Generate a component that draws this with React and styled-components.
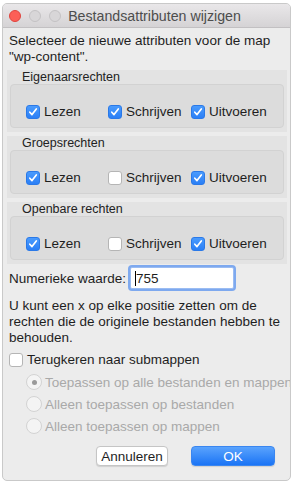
import styled, { createGlobalStyle } from "styled-components";

const GlobalStyle = createGlobalStyle`
  html, body {
    margin: 0;
    padding: 0;
    background: #ffffff;
  }
  body {
    font-family: "Liberation Sans", Arial, sans-serif;
    -webkit-font-smoothing: antialiased;
  }
`;

const Page = styled.div`
  width: 293px;
  height: 484px;
  padding: 3px 2px 3px 2px;
  box-sizing: border-box;
  background: #ffffff;
`;

const Window = styled.div`
  width: 289px;
  height: 478px;
  background: #ececec;
  border: 1px solid #c9c9c9;
  border-radius: 5px;
  box-sizing: border-box;
  overflow: hidden;
  display: flex;
  flex-direction: column;
  color: #1e1e1e;
  font-size: 13px;
`;

const TitleBar = styled.div`
  height: 23px;
  flex: none;
  display: flex;
  align-items: center;
  position: relative;
  background: linear-gradient(#e9e7e9, #d5d3d5);
  border-bottom: 1px solid #c2c0c2;
`;

const Lights = styled.div`
  display: flex;
  gap: 8px;
  padding-left: 6px;
`;

const Light = styled.span`
  width: 12px;
  height: 12px;
  border-radius: 50%;
  box-sizing: border-box;
  background: ${(p) => (p.$active ? "#fc5f57" : "#d8d6d8")};
  border: 1px solid ${(p) => (p.$active ? "#e0443e" : "#c4c2c4")};
`;

const Title = styled.div`
  position: absolute;
  left: 16px;
  right: 0;
  text-align: center;
  color: #4d4d4d;
  font-size: 14.2px;
  pointer-events: none;
`;

const Body = styled.div`
  flex: 1;
  display: flex;
  flex-direction: column;
  padding: 5px 3px 0 4px;
`;

const Text = styled.p`
  margin: 0 0 0 2px;
  line-height: 16px;
  font-size: 13.5px;
`;

const Sections = styled.div`
  display: flex;
  flex-direction: column;
  gap: 4px;
  margin-top: 5px;
`;

const Section = styled.div`
  height: 62px;
  box-sizing: border-box;
  background: #e3e3e3;
  padding: 0 3px 4px 3px;
  display: flex;
  flex-direction: column;
`;

const SectionLabel = styled.div`
  font-size: 12.5px;
  line-height: 14px;
  padding: 0 0 0 12px;
  color: #222;
`;

const Inner = styled.div`
  flex: 1;
  background: #dcdcdc;
  border: 1px solid #d2d2d2;
  border-radius: 4px;
  display: grid;
  grid-template-columns: 82px 83px auto;
  align-items: center;
  padding: 11px 0 0 15px;
  box-sizing: border-box;
`;

const CheckRow = styled.label`
  display: flex;
  align-items: center;
  gap: 4px;
  font-size: 13.5px;
  white-space: nowrap;
`;

const Box = styled.span`
  width: 14px;
  height: 14px;
  flex: none;
  box-sizing: border-box;
  border-radius: 3px;
  display: flex;
  align-items: center;
  justify-content: center;
  background: ${(p) => (p.$checked ? "linear-gradient(#4a9bfd, #2b7ff6)" : "#ffffff")};
  border: 1px solid ${(p) => (p.$checked ? "#2a79e8" : "#b5b5b5")};
`;

const Check = ({ checked, children }) => (
  <CheckRow>
    <Box $checked={checked}>
      {checked && (
        <svg width="10" height="10" viewBox="0 0 10 10">
          <path d="M1.8 5.2 L4 7.6 L8.3 2" fill="none" stroke="#fff" strokeWidth="1.7" strokeLinecap="round" strokeLinejoin="round" />
        </svg>
      )}
    </Box>
    {children}
  </CheckRow>
);

const NumRow = styled.div`
  display: flex;
  align-items: center;
  margin-top: 3px;
  padding-left: 2px;
  gap: 3px;
  font-size: 13.5px;
`;

const NumInput = styled.div`
  width: 104px;
  height: 22px;
  box-sizing: border-box;
  background: #fff;
  border: 1px solid #9bbcf2;
  box-shadow: 0 0 0 2px #7ea9ef;
  border-radius: 2px;
  margin-left: 1px;
  display: flex;
  align-items: center;
  padding-left: 4px;
  font-size: 13.5px;
`;

const Caret = styled.span`
  width: 1px;
  height: 15px;
  background: #000;
`;

const Hint = styled.p`
  margin: 9px 0 0 2px;
  line-height: 16px;
  font-size: 13.5px;
`;

const Recurse = styled.div`
  margin-top: 6px;
  padding-left: 2px;
`;

const Radios = styled.div`
  display: flex;
  flex-direction: column;
  gap: 6px;
  padding-left: 19px;
  margin-top: 7px;
`;

const RadioRow = styled.div`
  display: flex;
  align-items: center;
  gap: 3px;
  color: #a9a9a9;
  font-size: 13.5px;
  white-space: nowrap;
  height: 16px;
`;

const RadioDot = styled.span`
  width: 16px;
  height: 16px;
  flex: none;
  box-sizing: border-box;
  border-radius: 50%;
  background: #f4f4f4;
  border: 1px solid #d3d3d3;
  display: flex;
  align-items: center;
  justify-content: center;
  &::after {
    content: "";
    width: 5px;
    height: 5px;
    border-radius: 50%;
    background: ${(p) => (p.$on ? "#9a9a9a" : "transparent")};
  }
`;

const Buttons = styled.div`
  display: flex;
  justify-content: flex-end;
  gap: 23px;
  margin-top: auto;
  margin-bottom: 14px;
  padding-right: 12px;
`;

const Button = styled.div`
  height: 20px;
  width: ${(p) => p.$w}px;
  box-sizing: border-box;
  border-radius: 4px;
  display: flex;
  align-items: center;
  justify-content: center;
  font-size: 13.5px;
  background: ${(p) => (p.$primary ? "linear-gradient(#5aa3fd, #1b74f5)" : "#ffffff")};
  color: ${(p) => (p.$primary ? "#ffffff" : "#1e1e1e")};
  border: 1px solid ${(p) => (p.$primary ? "#3a86f0" : "#c5c5c5")};
  box-shadow: 0 1px 1px rgba(0, 0, 0, 0.12);
`;

const sections = [
  { label: "Eigenaarsrechten", values: [true, true, true] },
  { label: "Groepsrechten", values: [true, false, true] },
  { label: "Openbare rechten", values: [true, false, true] },
];

const names = ["Lezen", "Schrijven", "Uitvoeren"];

const radios = [
  "Toepassen op alle bestanden en mappen",
  "Alleen toepassen op bestanden",
  "Alleen toepassen op mappen",
];

export default function App() {
  return (
    <Page>
      <GlobalStyle />
      <Window>
        <TitleBar>
          <Lights>
            <Light $active />
            <Light />
            <Light />
          </Lights>
          <Title>Bestandsattributen wijzigen</Title>
        </TitleBar>
        <Body>
          <Text>
            Selecteer de nieuwe attributen voor de map
            <br />
            "wp-content".
          </Text>
          <Sections>
            {sections.map((s) => (
              <Section key={s.label}>
                <SectionLabel>{s.label}</SectionLabel>
                <Inner>
                  {names.map((n, i) => (
                    <Check key={n} checked={s.values[i]}>
                      {n}
                    </Check>
                  ))}
                </Inner>
              </Section>
            ))}
          </Sections>
          <NumRow>
            Numerieke waarde:
            <NumInput>
              <Caret />
              755
            </NumInput>
          </NumRow>
          <Hint>
            U kunt een x op elke positie zetten om de
            <br />
            rechten die de originele bestanden hebben te
            <br />
            behouden.
          </Hint>
          <Recurse>
            <Check checked={false}>Terugkeren naar submappen</Check>
          </Recurse>
          <Radios>
            {radios.map((r, i) => (
              <RadioRow key={r}>
                <RadioDot $on={i === 0} />
                {r}
              </RadioRow>
            ))}
          </Radios>
          <Buttons>
            <Button $w={72}>Annuleren</Button>
            <Button $w={84} $primary>
              OK
            </Button>
          </Buttons>
        </Body>
      </Window>
    </Page>
  );
}
